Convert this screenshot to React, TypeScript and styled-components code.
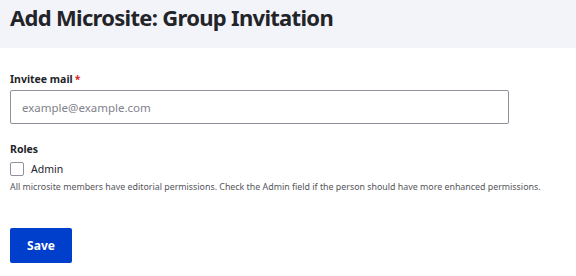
import styled, { createGlobalStyle } from 'styled-components';

const GlobalStyle = createGlobalStyle`
  body {
    margin: 0;
    background: #ffffff;
    font-family: "Noto Sans", "DejaVu Sans", sans-serif;
    color: #232429;
  }
`;

const Header = styled.header`
  background: #f3f4f9;
  height: 48px;
  padding: 0 10px;
  box-sizing: border-box;
`;

const Title = styled.h1`
  margin: 0;
  padding-top: 2px;
  font-size: 22px;
  font-weight: 700;
  line-height: 30px;
  letter-spacing: -0.7px;
  color: #232429;
`;

const Form = styled.form`
  display: flex;
  flex-direction: column;
  padding: 23px 10px 0;
`;

const Field = styled.div<{ $gap?: number }>`
  display: flex;
  flex-direction: column;
  margin-bottom: ${(p) => p.$gap ?? 0}px;
`;

const Label = styled.label`
  font-size: 10.5px;
  font-weight: 700;
  line-height: 16px;
  margin-bottom: 3px;
`;

const Required = styled.span`
  color: #dc2323;
  margin-left: 2px;
`;

const Input = styled.input`
  width: 499px;
  height: 34px;
  box-sizing: border-box;
  border: 1px solid #8e929c;
  border-radius: 2px;
  padding: 0 11px;
  font-family: inherit;
  font-size: 11.5px;
  color: #232429;
  &::placeholder {
    color: #82828c;
  }
`;

const CheckRow = styled.div`
  display: flex;
  align-items: center;
  gap: 7px;
  height: 16px;
  margin-top: 1px;
`;

const Box = styled.span`
  width: 12px;
  height: 12px;
  border: 1px solid #8e929c;
  border-radius: 2px;
  background: #fff;
`;

const CheckLabel = styled.span`
  font-size: 10.5px;
  line-height: 16px;
`;

const Description = styled.div`
  font-size: 8.85px;
  line-height: 14px;
  color: #55565b;
  margin-top: 3px;
`;

const Button = styled.button`
  align-self: flex-start;
  width: 62px;
  height: 35px;
  background: #003ecc;
  color: #fff;
  border: none;
  border-radius: 2px;
  font-family: inherit;
  font-size: 12px;
  font-weight: 700;
  padding: 0;
`;

export default function App() {
  return (
    <>
      <GlobalStyle />
      <Header>
        <Title>Add Microsite: Group Invitation</Title>
      </Header>
      <Form>
        <Field $gap={17}>
          <Label>
            Invitee mail<Required>*</Required>
          </Label>
          <Input placeholder="example@example.com" />
        </Field>
        <Field $gap={34}>
          <Label>Roles</Label>
          <CheckRow>
            <Box />
            <CheckLabel>Admin</CheckLabel>
          </CheckRow>
          <Description>
            All microsite members have editorial permissions. Check the Admin field if the person should have more enhanced permissions.
          </Description>
        </Field>
        <Button type="button">Save</Button>
      </Form>
    </>
  );
}
